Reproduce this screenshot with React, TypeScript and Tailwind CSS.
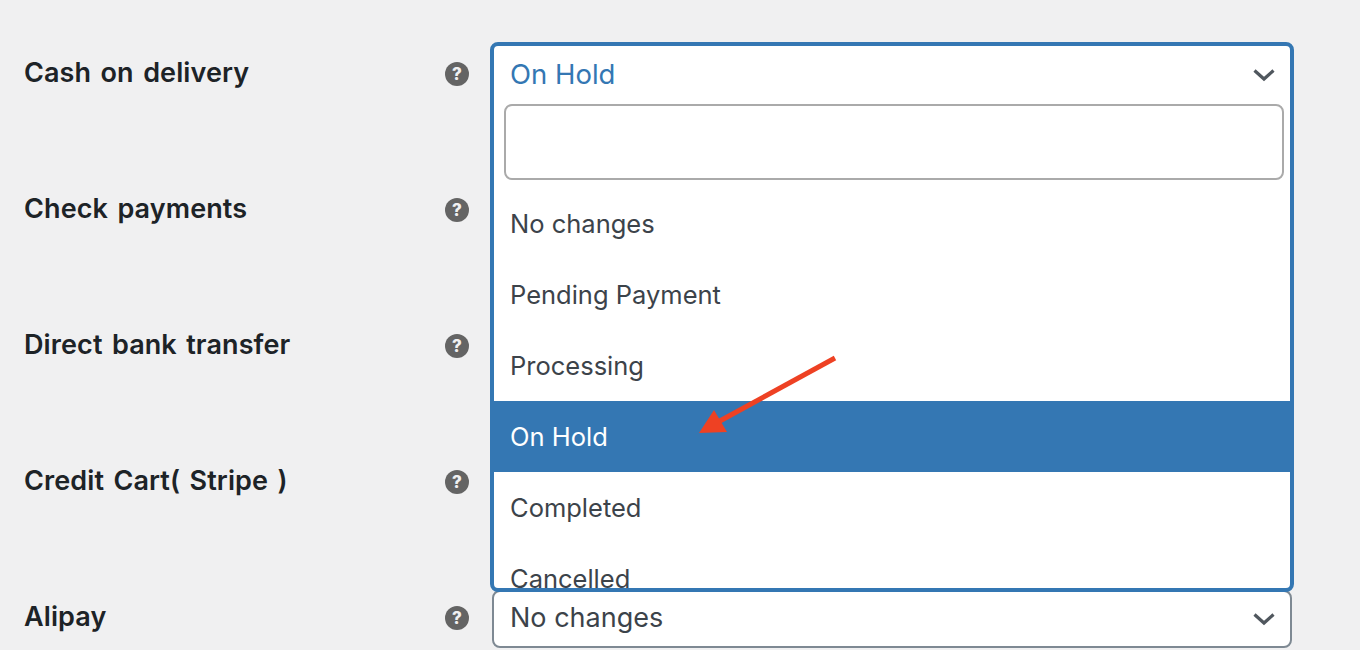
const labels = ["Cash on delivery", "Check payments", "Direct bank transfer", "Credit Cart( Stripe )", "Alipay"];
const options = ["No changes", "Pending Payment", "Processing", "On Hold", "Completed", "Cancelled"];

function Help() {
  return (
    <svg width="24" height="24" viewBox="0 0 24 24" className="block">
      <circle cx="12" cy="12" r="12" fill="#646464" />
      <text x="12" y="18" textAnchor="middle" fontSize="17" fontWeight="800" fill="#f0f0f1" fontFamily="Inter, sans-serif">?</text>
    </svg>
  );
}

function Chevron() {
  return (
    <svg width="24" height="14" viewBox="0 0 24 14" className="block">
      <path d="M2.5 2.5 L12 11 L21.5 2.5" fill="none" stroke="#50575e" strokeWidth="3.2" />
    </svg>
  );
}

function Dropdown() {
  return (
    <div className="absolute left-[-2px] top-[-4px] z-10 h-[550px] w-[804px] overflow-hidden rounded-lg border-4 border-[#3477b3] bg-white">
      <div className="flex h-[58px] items-center justify-between pl-[16px] pr-[14px] text-[27.5px] text-[#3477b3]">
        <span>On Hold</span>
        <Chevron />
      </div>
      <div className="ml-[10px] mr-[6px] h-[76px] rounded-lg border-2 border-[#aaaaaa] bg-white" />
      <ul className="mt-[8px] text-[#3c434a]">
        {options.map((o) => (
          <li
            key={o}
            className={`flex h-[71px] items-center pl-[16px] pt-[2px] text-[25.5px] ${o === "On Hold" ? "bg-[#3477b3] text-white" : ""}`}
          >
            {o}
          </li>
        ))}
      </ul>
    </div>
  );
}

export default function App() {
  return (
    <div className="relative h-[650px] w-[1360px] overflow-hidden bg-[#f0f0f1] pt-[46px] text-[27px] font-['Inter',sans-serif]">
      {labels.map((l, i) => (
        <div key={l} className="flex h-[136px] items-start">
          <div className="mt-[1px] h-[52px] w-[445px] pl-[24px] text-[27px] leading-[52px] font-semibold tracking-[0.1px] [word-spacing:2.5px] text-[#1d2327]">{l}</div>
          <div className="w-[47px] pt-[16px]"><Help /></div>
          <div className="relative h-[58px] w-[800px]">
            {i === 0 && <Dropdown />}
            {i === 4 && (
              <div className="flex h-[58px] items-center justify-between rounded-lg border-2 border-[#7e8993] bg-white pl-[16px] pr-[14px] text-[#3c434a]">
                <span className="mt-[-2px]">No changes</span>
                <Chevron />
              </div>
            )}
          </div>
        </div>
      ))}
      <svg className="absolute left-[690px] top-[350px] z-20" width="160" height="90" viewBox="0 0 160 90">
        <path d="M145 8 L28 72" stroke="#ee4123" strokeWidth="5" fill="none" />
        <path d="M9 83 L24 60 L37 82 Z" fill="#ee4123" />
      </svg>
    </div>
  );
}
